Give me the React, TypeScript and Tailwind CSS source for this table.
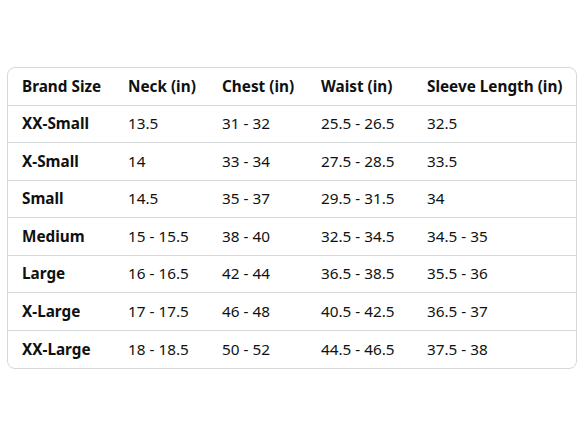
const headers = ["Brand Size", "Neck (in)", "Chest (in)", "Waist (in)", "Sleeve Length (in)"];

const rows = [
  ["XX-Small", "13.5", "31 - 32", "25.5 - 26.5", "32.5"],
  ["X-Small", "14", "33 - 34", "27.5 - 28.5", "33.5"],
  ["Small", "14.5", "35 - 37", "29.5 - 31.5", "34"],
  ["Medium", "15 - 15.5", "38 - 40", "32.5 - 34.5", "34.5 - 35"],
  ["Large", "16 - 16.5", "42 - 44", "36.5 - 38.5", "35.5 - 36"],
  ["X-Large", "17 - 17.5", "46 - 48", "40.5 - 42.5", "36.5 - 37"],
  ["XX-Large", "18 - 18.5", "50 - 52", "44.5 - 46.5", "37.5 - 38"],
];

const widths = ["w-[106px]", "w-[94px]", "w-[99px]", "w-[106px]", "w-[163px]"];

export default function App() {
  return (
    <div className="w-[588px] h-[441px] bg-white pt-[67px] pl-[7px] font-['Noto_Sans',sans-serif] text-[#0f1111]">
      <div className="w-[570px] rounded-lg border border-[#d5d9d9] overflow-hidden">
        <table className="w-full border-collapse table-fixed text-[15.3px]">
          <thead>
            <tr className="h-[37px]">
              {headers.map((h, i) => (
                <th key={h} className={`${widths[i]} text-left font-bold pl-[14px]`}>
                  {h}
                </th>
              ))}
            </tr>
          </thead>
          <tbody>
            {rows.map((r) => (
              <tr key={r[0]} className="h-[37.5px] border-t border-[#d5d9d9]">
                {r.map((c, i) => (
                  <td key={i} className={`pl-[14px] ${i === 0 ? "font-bold" : ""}`}>
                    {c}
                  </td>
                ))}
              </tr>
            ))}
          </tbody>
        </table>
      </div>
    </div>
  );
}
